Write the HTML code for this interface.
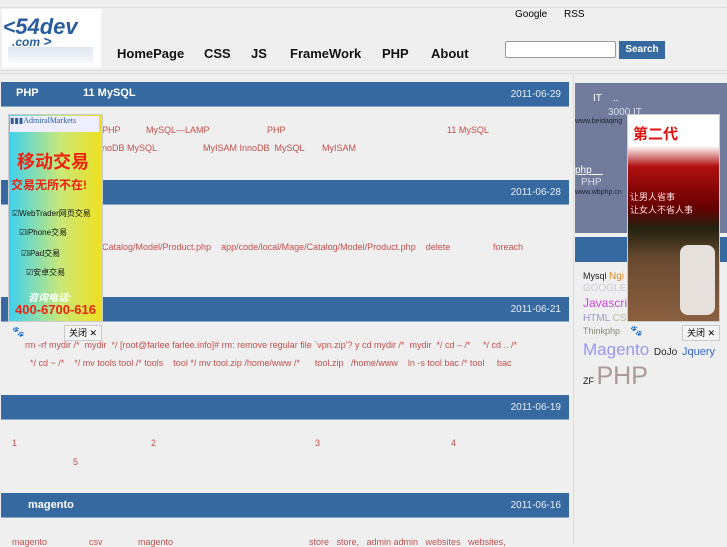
<!DOCTYPE html>
<html><head><meta charset="utf-8"><style>
body{margin:0;width:727px;height:545px;overflow:hidden;background:#efefef;font-family:"Liberation Sans","Noto Sans CJK SC",sans-serif;position:relative}
.a{position:absolute}
.bar{position:absolute;left:1px;width:568px;height:24px;background:#36699f;border-bottom:1px solid #8aa8c8;color:#fff;font-size:11px}
.bar .d{position:absolute;right:8px;top:7px;font-size:10px;color:#e8eef5}
.r{color:#c0504d;font-size:9px;position:absolute;white-space:nowrap}
.nav{position:absolute;top:46px;font-size:13px;font-weight:bold;color:#111}
</style></head><body>
<div class="a" style="left:0;top:7px;width:727px;height:62px;border-top:1px solid #ddd;border-bottom:1px solid #ddd"></div>
<div class="a" style="left:2px;top:9px;width:99px;height:59px;background:#fff"></div>
<div class="a" style="left:3px;top:14px;font:italic bold 21px 'Liberation Sans';color:#2a5d9c">&lt;<span style="font-size:22px">54dev</span></div>
<div class="a" style="left:12px;top:33px;font:italic bold 12px 'Liberation Sans';color:#2a5d9c">.com <span style="font-size:14px">&gt;</span></div>
<div class="a" style="left:8px;top:47px;width:85px;height:16px;background:linear-gradient(#dde6f0,#f6f8fb)"></div>
<div class="nav" style="left:117px">HomePage</div>
<div class="nav" style="left:204px">CSS</div>
<div class="nav" style="left:251px">JS</div>
<div class="nav" style="left:290px">FrameWork</div>
<div class="nav" style="left:382px">PHP</div>
<div class="nav" style="left:431px">About</div>
<div class="a" style="left:515px;top:9px;font-size:10px">Google</div>
<div class="a" style="left:564px;top:9px;font-size:10px">RSS</div>
<div class="a" style="left:505px;top:41px;width:109px;height:15px;background:#fff;border:1px solid #999;border-radius:2px"></div>
<div class="a" style="left:619px;top:41px;width:46px;height:18px;background:#36699f;color:#fff;font-size:10px;font-weight:bold;text-align:center;line-height:17px">Search</div>
<div class="a" style="left:0;top:73px;width:727px;height:472px;border-top:1px solid #ddd"></div>
<div class="a" style="left:573px;top:74px;width:1px;height:471px;background:#ddd"></div>

<div class="bar" style="top:82px"><span class="a" style="left:15px;top:5px;font-size:11px;font-weight:bold">PHP</span><span class="a" style="left:82px;top:5px;font-size:11px;font-weight:bold">11 MySQL</span><span class="d">2011-06-29</span></div>
<div class="r" style="left:102px;top:125px">PHP</div><div class="r" style="left:146px;top:125px">MySQL—LAMP</div><div class="r" style="left:267px;top:125px">PHP</div><div class="r" style="left:447px;top:125px">11 MySQL</div>
<div class="r" style="left:102px;top:143px">noDB MySQL</div><div class="r" style="left:203px;top:143px">MyISAM InnoDB &nbsp;MySQL</div><div class="r" style="left:322px;top:143px">MyISAM</div>

<div class="bar" style="top:180px"><span class="d">2011-06-28</span></div>
<div class="r" style="left:102px;top:242px">Catalog/Model/Product.php &nbsp;&nbsp; app/code/local/Mage/Catalog/Model/Product.php &nbsp;&nbsp; delete</div><div class="r" style="left:493px;top:242px">foreach</div>

<div class="bar" style="top:297px"><span class="d">2011-06-21</span></div>
<div class="r" style="left:25px;top:340px">rm -rf mydir /* &nbsp;mydir &nbsp;*/ [root@farlee farlee.info]# rm: remove regular file `vpn.zip'? y cd mydir /* &nbsp;mydir &nbsp;*/ cd – /* &nbsp;&nbsp;&nbsp;&nbsp;*/ cd .. /*</div>
<div class="r" style="left:30px;top:358px">*/ cd ~ /* &nbsp;&nbsp;&nbsp;*/ mv tools tool /* tools &nbsp;&nbsp;&nbsp;tool */ mv tool.zip /home/www /* &nbsp;&nbsp;&nbsp;&nbsp;&nbsp;tool.zip &nbsp;&nbsp;/home/www &nbsp;&nbsp;&nbsp;ln -s tool bac /* tool &nbsp;&nbsp;&nbsp;&nbsp;bac</div>

<div class="bar" style="top:395px"><span class="d">2011-06-19</span></div>
<div class="r" style="left:12px;top:438px">1</div><div class="r" style="left:151px;top:438px">2</div><div class="r" style="left:315px;top:438px">3</div><div class="r" style="left:451px;top:438px">4</div><div class="r" style="left:73px;top:457px">5</div>

<div class="bar" style="top:493px"><span class="a" style="left:27px;top:6px;font-size:11px;font-weight:bold">magento</span><span class="d">2011-06-16</span></div>
<div class="r" style="left:12px;top:537px">magento</div><div class="r" style="left:89px;top:537px">csv</div><div class="r" style="left:138px;top:537px">magento</div><div class="r" style="left:309px;top:537px">store &nbsp;&nbsp;store, &nbsp;&nbsp;admin admin &nbsp;&nbsp;websites &nbsp;&nbsp;websites,</div>

<div class="a" style="left:575px;top:83px;width:152px;height:150px;background:#717c9c"></div>
<div class="a" style="left:593px;top:93px;font-size:10px;color:#fff">IT &nbsp;&nbsp; ..</div>
<div class="a" style="left:608px;top:107px;font-size:10px;color:#dde">3000 IT</div>
<div class="a" style="left:575px;top:118px;font-size:7px;color:#223">www.beidaqing</div>
<div class="a" style="left:575px;top:165px;font-size:10px;color:#fff;text-decoration:underline">php &nbsp;&nbsp;&nbsp;</div>
<div class="a" style="left:581px;top:177px;font-size:10px;color:#dde">PHP</div>
<div class="a" style="left:575px;top:189px;font-size:7px;color:#223">www.wbphp.cn</div>
<div class="a" style="left:575px;top:237px;width:152px;height:25px;background:#36699f"></div>
<div class="a" style="left:583px;top:271px;font-size:9px;color:#222">Mysql <span style="color:#e08a2a;font-size:10px">Ngi</span></div>
<div class="a" style="left:583px;top:283px;font-size:10px;color:#ccd">GOOGLE</div>
<div class="a" style="left:583px;top:296px;font-size:12px;color:#c4d">Javascri</div>
<div class="a" style="left:583px;top:313px;font-size:10px;color:#99c">HTML <span style="color:#bb9">CS</span></div>
<div class="a" style="left:583px;top:326px;font-size:9px;color:#887">Thinkphp</div>
<div class="a" style="left:583px;top:340px;font-size:17px;color:#99e">Magento <span style="font-size:10px;color:#222">DoJo</span> <span style="font-size:11px;color:#36c">Jquery</span></div>
<div class="a" style="left:583px;top:362px;font-size:9px;color:#111">ZF <span style="font-size:25px;color:#a99">PHP</span></div>

<div class="a" style="left:8px;top:114px;width:93px;height:206px;background:linear-gradient(90deg,#3ed0f0,#c8e878 55%,#f0e020);border:1px solid #ccc"></div>
<div class="a" style="left:10px;top:116px;width:89px;height:16px;background:#eef;font-size:8px;color:#2a5d9c;font-family:'Liberation Serif'">▮▮▮AdmiralMarkets</div>
<div class="a" style="left:17px;top:148px;font-size:18px;font-weight:bold;color:#e21">移动交易</div>
<div class="a" style="left:11px;top:176px;font-size:12px;font-weight:bold;color:#e21">交易无所不在!</div>
<div class="a" style="left:12px;top:208px;font-size:8px;color:#111">☑WebTrader网页交易</div>
<div class="a" style="left:19px;top:227px;font-size:8px;color:#111">☑iPhone交易</div>
<div class="a" style="left:21px;top:248px;font-size:8px;color:#111">☑iPad交易</div>
<div class="a" style="left:26px;top:267px;font-size:8px;color:#111">☑安卓交易</div>
<div class="a" style="left:28px;top:289px;font-size:10px;font-style:italic;font-weight:bold;color:#fff">咨询电话:</div>
<div class="a" style="left:15px;top:302px;font-size:13px;font-weight:bold;color:#e21">400-6700-616</div>
<div class="a" style="left:12px;top:327px;font-size:10px;color:#666">🐾</div>
<div class="a" style="left:64px;top:325px;width:36px;height:14px;background:#f4f4f4;border:1px solid #ccc;font-size:9px;line-height:14px;text-align:center">关闭 ✕</div>

<div class="a" style="left:627px;top:114px;width:91px;height:206px;background:linear-gradient(#fff 0,#fff 15%,#b01010 25%,#600 45%,#221 55%,#6a4a30 70%,#8a6040 100%);border:1px solid #ccc"></div>
<div class="a" style="left:633px;top:123px;font-size:15px;font-weight:bold;color:#d11">第二代</div>
<div class="a" style="left:630px;top:190px;font-size:9px;color:#fdd">让男人省事</div>
<div class="a" style="left:630px;top:203px;font-size:9px;color:#fdd">让女人不省人事</div>
<div class="a" style="left:680px;top:245px;width:35px;height:70px;background:#e6e0dc;border-radius:8px"></div>
<div class="a" style="left:630px;top:326px;font-size:10px;color:#666">🐾</div>
<div class="a" style="left:682px;top:325px;width:36px;height:14px;background:#f4f4f4;border:1px solid #ccc;font-size:9px;line-height:14px;text-align:center">关闭 ✕</div>
</body></html>
